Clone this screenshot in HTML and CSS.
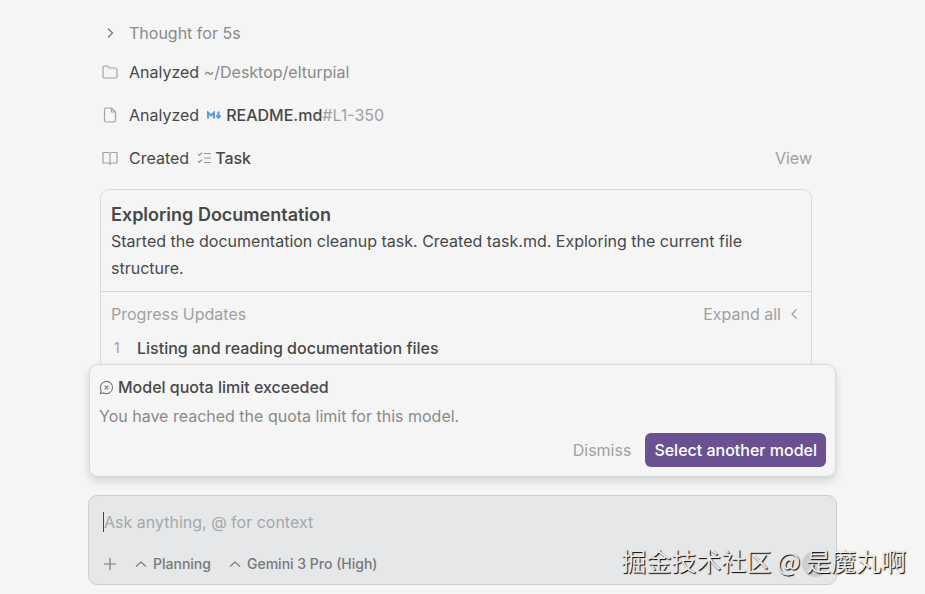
FILE: index.html
```
<!DOCTYPE html>
<html lang="en">
<head>
  <meta charset="UTF-8">
  <title>Agent</title>
  <link rel="stylesheet" href="styles.css">
</head>
<body>
  <main class="log">
    <button class="step thought">
      <svg class="icon" viewBox="0 0 16 16"><path d="M6 3.500l4.500 4.500L6 12.500"/></svg>
      Thought for 5s
    </button>

    <div class="step">
      <svg class="icon" viewBox="0 0 16 16"><path d="M1 3.500a1.500 1.500 0 0 1 1.500-1.500h3l2 2H13.500a1.500 1.500 0 0 1 1.500 1.500V12.500a1.500 1.500 0 0 1-1.500 1.500H2.500a1.500 1.500 0 0 1-1.500-1.500z"/></svg>
      <span>Analyzed <span class="path">~/Desktop/elturpial</span></span>
    </div>

    <div class="step file">
      <svg class="icon" viewBox="0 0 16 16"><path d="M9.500 1H4a1.500 1.500 0 0 0-1.500 1.500v11A1.500 1.500 0 0 0 4 15h8a1.500 1.500 0 0 0 1.500-1.500V5zM9.500 1v4h4"/></svg>
      <span>Analyzed</span>
      <svg class="md" viewBox="0 0 14 8"><path d="M1 7.500v-6l3 3 3-3v6M11.500 .5v6M9.500 4.500l2 2.200 2-2.200"/></svg>
      <span class="name">README.md<span class="lines">#L1-350</span></span>
    </div>

    <div class="step file">
      <svg class="icon" viewBox="0 0 16 16"><path d="M8 4v11M8 4c0-1-.8-1.500-1.800-1.500H1V13h5.200c1 0 1.800.8 1.800 2M8 4c0-1 .8-1.500 1.800-1.500H15V13H9.800c-1 0-1.800.8-1.800 2"/></svg>
      <span>Created</span>
      <svg class="tasks" viewBox="0 0 14 12"><path d="M1 2l1.300 1.300L5 .8M1 9l1.300 1.300L5 7.800M7 1.500h7M7 6h7M7 10.500h7"/></svg>
      <span class="name">Task</span>
      <button class="view">View</button>
    </div>

    <section class="card">
      <div class="summary">
        <h2>Exploring Documentation</h2>
        <p>Started the documentation cleanup task. Created task.md. Exploring the current file structure.</p>
      </div>
      <div class="progress">
        <div class="progress-head">
          <span>Progress Updates</span>
          <button class="expand">Expand all
            <svg class="chevron" viewBox="0 0 8 12"><path d="M6.500 1.500L2 6l4.500 4.500"/></svg>
          </button>
        </div>
        <ol class="updates">
          <li>Listing and reading documentation files</li>
        </ol>
      </div>
    </section>
  </main>

  <section class="notice" role="alert">
    <h3>
      <svg class="alert-icon" viewBox="0 0 16 16"><path d="M1.500 14.500L2.200 11A6.500 6.500 0 1 1 5 13.800zM6 6l4 4M10 6l-4 4"/></svg>
      Model quota limit exceeded
    </h3>
    <p>You have reached the quota limit for this model.</p>
    <div class="actions">
      <button class="dismiss">Dismiss</button>
      <button class="primary">Select another model</button>
    </div>
  </section>

  <form class="composer">
    <div class="prompt">
      <span class="caret"></span>
      <input type="text" aria-label="Message" placeholder="Ask anything, @ for context">
    </div>
    <div class="tools">
      <button type="button" class="add" aria-label="Add context">
        <svg class="plus" viewBox="0 0 12 12"><path d="M6 0v12M0 6h12"/></svg>
      </button>
      <label class="picker">
        <svg class="up" viewBox="0 0 12 8"><path d="M1 6.500l5-4.500 5 4.500"/></svg>
        <select aria-label="Mode"><option>Planning</option></select>
      </label>
      <label class="picker">
        <svg class="up" viewBox="0 0 12 8"><path d="M1 6.500l5-4.500 5 4.500"/></svg>
        <select aria-label="Model"><option>Gemini 3 Pro (High)</option></select>
      </label>
      <button type="button" class="send" aria-label="Send"></button>
    </div>
  </form>

  <div class="watermark">掘金技术社区 @ 是魔丸啊</div>
</body>
</html>
```
FILE: styles.css
```
* {
  box-sizing: border-box;
}

body {
  display: flex;
  flex-direction: column;
  height: 100vh;
  margin: 0;
  padding: 0 88px 9px;
  overflow: hidden;
  background: #f5f5f5;
  color: #484848;
  font: 16px/24px Inter, "Noto Sans CJK SC", sans-serif;
}

h2, h3, p, ol {
  margin: 0;
  padding: 0;
}

button, input, select {
  margin: 0;
  padding: 0;
  border: 0;
  background: none;
  color: inherit;
  font: inherit;
}

svg {
  flex: none;
  fill: none;
  stroke: currentColor;
  stroke-width: 1.2;
}

/* activity log */
.log {
  flex: 1;
  min-height: 0;
  padding: 21px 25px 0 12px;
  overflow: hidden;
}

.step {
  display: flex;
  align-items: center;
  margin-bottom: 19px;
}

.icon {
  width: 16px;
  height: 16px;
  margin: 0 11px 0 2px;
  color: #a3a3a3;
}

.thought {
  margin-bottom: 15px;
  color: #8a8a8a;
}

.thought .icon {
  color: #777;
}

.path {
  color: #8a8a8a;
}

.md {
  width: 14px;
  height: 8px;
  margin: 0 5px 0 8px;
  color: #5b9ae0;
  stroke-width: 2;
}

.tasks {
  width: 14px;
  height: 12px;
  margin: 0 4px 0 8px;
  color: #999;
}

.name {
  font-weight: 500;
}

.lines {
  color: #a0a0a0;
  font-weight: 400;
}

.view {
  margin-left: auto;
  color: #a0a0a0;
}

/* task card */
.card {
  border: 1px solid #dadada;
  border-radius: 9px;
}

.summary {
  padding: 12px 10px 9px;
  border-bottom: 1px solid #dadada;
  line-height: 27px;
}

.summary h2 {
  font-size: 18px;
  font-weight: 600;
  line-height: 26px;
}

.progress {
  padding: 10px;
}

.progress-head {
  display: flex;
  justify-content: space-between;
  color: #a0a0a0;
}

.expand {
  display: flex;
  align-items: center;
  gap: 9px;
  margin-right: 3px;
}

.chevron {
  width: 8px;
  height: 12px;
}

.updates {
  margin-top: 10px;
  list-style: none;
  counter-reset: step;
  font-weight: 500;
}

.updates li {
  display: flex;
}

.updates li::before {
  counter-increment: step;
  content: counter(step);
  width: 23px;
  padding-left: 3px;
  color: #a0a0a0;
  font-size: 14px;
  font-weight: 400;
}

/* quota notice */
.notice {
  position: relative;
  margin: 0 1px;
  padding: 10px 9px 9px;
  border: 1px solid #dadada;
  border-radius: 9px;
  background: #f5f5f5;
  box-shadow: 0 4px 8px rgba(0, 0, 0, 0.14);
}

.notice h3 {
  display: flex;
  align-items: center;
  gap: 4px;
  font-size: 16px;
  font-weight: 500;
}

.alert-icon {
  width: 15px;
  height: 15px;
  color: #777;
}

.notice p {
  margin-top: 5px;
  color: #8a8a8a;
}

.actions {
  display: flex;
  justify-content: flex-end;
  gap: 14px;
  margin-top: 5px;
}

.dismiss {
  color: #a0a0a0;
}

.primary {
  padding: 5px 9px;
  border-radius: 6px;
  background: #6a5292;
  color: #fff;
  font-weight: 500;
}

/* message box */
.composer {
  margin-top: 18px;
  padding: 14px 8px 7px 14px;
  border: 1px solid #ccd0d2;
  border-radius: 9px;
  background: #e5e7e9;
}

.prompt {
  display: flex;
  align-items: center;
}

.caret {
  width: 1px;
  height: 20px;
  background: #444;
}

.prompt input {
  flex: 1;
  height: 24px;
  outline: none;
}

.prompt input::placeholder {
  color: #a6a8aa;
}

.tools {
  display: flex;
  align-items: center;
  height: 26px;
  margin-top: 17px;
  color: #77797b;
  font-size: 14px;
  font-weight: 500;
}

.add {
  display: flex;
  margin: 0 19px 0 1px;
}

.plus {
  width: 12px;
  height: 12px;
}

.picker {
  display: flex;
  align-items: center;
  gap: 6px;
  margin-right: 18px;
}

.picker select {
  appearance: none;
  outline: none;
}

.up {
  width: 12px;
  height: 8px;
}

.send {
  width: 26px;
  height: 26px;
  margin-left: auto;
  border-radius: 50%;
  background: #cccecf;
}

.watermark {
  position: absolute;
  right: 19px;
  bottom: 16px;
  color: #e8e8e8;
  font-family: "Noto Sans CJK SC", sans-serif;
  font-size: 25px;
  line-height: 36px;
  text-shadow: 1px 1px 1px #000;
}
```
